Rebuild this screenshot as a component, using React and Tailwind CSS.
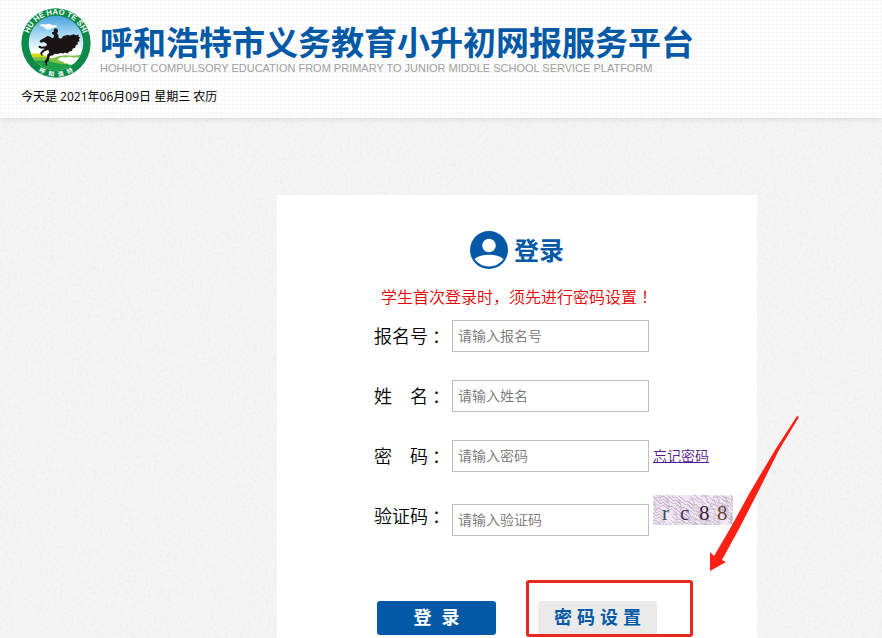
import { useState } from "react";

const FONT = "font-['Noto_Sans_CJK_SC','Liberation_Sans',sans-serif]";

// NOTE: centers trailing full-width punctuation in its cell
const Punct = ({ children }) => <span className="-mr-1 ml-1">{children}</span>;

const Logo = () => (
  <svg viewBox="20 8 208 208" className="h-[70px] w-[70px] shrink-0" role="img" aria-label="HU HE HAO TE SHI">
    <defs>
      <linearGradient id="sky" x1="0" y1="0" x2="0" y2="1">
        <stop offset="0" stopColor="#3f9fdc" />
        <stop offset="0.35" stopColor="#a9d8f3" />
        <stop offset="0.65" stopColor="#ffffff" />
      </linearGradient>
      <clipPath id="inner">
        <circle cx="124" cy="112" r="81" />
      </clipPath>
      <path id="topArc" d="M39 112a85 85 0 0 1 170 0" />
      <path id="bottomArc" d="M25 112a99 99 0 0 0 198 0" />
    </defs>
    <circle cx="124" cy="112" r="103" fill="#0c8a49" />
    <g clipPath="url(#inner)">
      <rect x="40" y="28" width="168" height="168" fill="url(#sky)" />
      <path d="M74 60q10-8 20-2 12-7 20 2 10-4 14 4-12 2-18 5-10 6-16 1-2-6-20-10z" fill="#fff" />
      <path d="M38 150q26-14 50-2 20 8 30 14l-20 30-60-10z" fill="#d3dc14" />
      <path d="M36 162q36-16 76-4 30-14 60-8l40-4v60H36z" fill="#7cc142" />
      <path d="M36 170q44-14 90 2 40 8 86-4v40H36z" fill="#1fa04b" />
      <path d="M128 160q14-10 26-4 10-7 22 0 12-4 20 2 10-3 18 4v9q-12 8-22 3-8 7-18 1-10 5-17-3-9 3-12-5-9 1-17-7z" fill="#fff" />
    </g>
    <path
      d="M92 96l6-5 8 2 7 5 4-2 1-8-5-3-1-5 6-2-1-6 6-4 6 3 1 6-3 6 4 5 1 9 7 2 7-8 12-3 8 2 10-4 8 3 8-2-2 6 6 3-4 5 2 5-6 4 1 6-6 3-2 7-7 2-3 8-7 1-6 6-6-3-7 3-8-1-8 3-9-1-6 5-7 1-3 5-1 9-6 6 1 9-5-1-1-7-3-3 7-9 2-12 6-7-3-7-10 3-8 7 1 7-4-1-3-7 6-8 8-5-12-1-6-2-1-5 5-1 4 3 12-1 5-4-4-6-7-3-8 2-4-3 3-5z"
      fill="#191413"
    />
    <text fontSize="23" fontWeight="700" fill="#fff" textAnchor="middle" className="font-['Liberation_Sans',sans-serif]">
      <textPath href="#topArc" startOffset="50%">HU HE HAO TE SHI</textPath>
    </text>
    <text fontSize="18" fontWeight="700" fill="#fff" textAnchor="middle" xmlSpace="preserve" className="font-['Noto_Sans_CJK_SC',sans-serif]">
      <textPath href="#bottomArc" startOffset="50%">呼&#160;&#160;&#160;和&#160;&#160;&#160;浩&#160;&#160;&#160;特</textPath>
    </text>
  </svg>
);

const UserIcon = () => (
  <svg viewBox="0 0 38 38" className="h-[38px] w-[38px]" aria-hidden="true">
    <circle cx="19" cy="19" r="19" fill="#0459a6" />
    <circle cx="19" cy="14.5" r="6.8" fill="#fff" />
    <path d="M4.5 28Q10 23.8 19 23.8T33.5 28Q28 35.5 19 35.5T4.5 28z" fill="#fff" />
  </svg>
);

const SQUIGGLES = Array.from({ length: 80 }, (_, i) => {
  const x = ((i * 37) % 92) - 8;
  const y = ((i * 29) % 37) - 4;
  const a = (i * 7) % 5;
  const b = (i * 11) % 4;
  return `M${x} ${y}l${1 + a} ${b} 2 ${3 - b} ${b} 3 3 ${a - 2} ${4 - a} 3 2 ${b}`;
});

const Captcha = () => (
  <svg viewBox="0 0 80 30" className="h-[30px] w-[80px] self-start" role="img" aria-label="验证码">
    <rect width="80" height="30" fill="#f0e6f4" />
    {SQUIGGLES.map((d, i) => (
      <path key={i} d={d} fill="none" stroke={i % 2 ? "#bba6c2" : "#ab9bac"} strokeWidth="0.7" />
    ))}
    <g fontSize="21" className="font-['Liberation_Serif',serif]">
      <text x="9" y="25" fill="#2c5560">r</text>
      <text x="27" y="25" fill="#46305f">c</text>
      <text x="46" y="25" fill="#3c2038">8</text>
      <text x="64" y="25" fill="#6b4636">8</text>
    </g>
  </svg>
);

const Field = ({ id, label, placeholder, type = "text", value, onChange, className = "items-center", children }) => (
  <div className={`flex ${className}`}>
    <label
      htmlFor={id}
      className="w-[78px] shrink-0 self-center pb-[2px] text-lg leading-6 font-[350] whitespace-nowrap text-black"
    >
      {label}
      <Punct>：</Punct>
    </label>
    <input
      id={id}
      name={id}
      type={type}
      value={value}
      placeholder={placeholder}
      onChange={onChange}
      className="mr-1 h-8 w-[197px] border border-[#bfbfbf] bg-white px-[5px] pb-[2px] text-sm font-[350] text-black placeholder:text-[#757575]"
    />
    {children}
  </div>
);

const Header = () => (
  <header className="relative z-10 bg-[#fefefe] bg-[linear-gradient(to_right,#f9f9f9_1px,transparent_1px),linear-gradient(to_bottom,#f9f9f9_1px,transparent_1px)] bg-[length:4px_4px] px-[21px] pt-2 pb-3 shadow-[0_1px_6px_rgba(0,0,0,0.12)]">
    <div className="flex items-start gap-[9px]">
      <Logo />
      <div className="pt-[14px] whitespace-nowrap">
        <h1 className="text-[33px] leading-[38px] font-bold text-[#0459a6]">
          呼和浩特市义务教育小升初网报服务平台
        </h1>
        <p className="mt-[2px] font-['Liberation_Sans',sans-serif] text-[11px] leading-3 text-[#a0a0a0]">
          HOHHOT COMPULSORY EDUCATION FROM PRIMARY TO JUNIOR MIDDLE SCHOOL SERVICE PLATFORM
        </p>
      </div>
    </div>
    <p className="mt-[10px] font-['Open_Sans','Noto_Sans_CJK_SC',sans-serif] text-xs leading-[18px] text-black">
      今天是 2021年06月09日 星期三 农历
    </p>
  </header>
);

const Texture = () => (
  <svg className="absolute inset-0 h-full w-full" aria-hidden="true">
    <filter id="paper">
      <feTurbulence type="fractalNoise" baseFrequency="0.35" numOctaves="2" seed="4" />
      <feColorMatrix values="0 0 0 0 0.5  0 0 0 0 0.5  0 0 0 0 0.5  0.25 0 0 0 -0.1" />
    </filter>
    <rect width="100%" height="100%" filter="url(#paper)" />
  </svg>
);

const LoginCard = () => {
  const [form, setForm] = useState({ number: "", name: "", password: "", code: "" });

  const bind = (key) => ({
    id: key,
    value: form[key],
    onChange: (e) => setForm({ ...form, [key]: e.target.value }),
  });

  return (
    <section className="relative w-[480px] max-w-full bg-white pt-9">
      <div className="flex items-center justify-center gap-[6px]">
        <UserIcon />
        <h2 className="pb-[2px] text-[25px] leading-9 font-bold text-[#0459a6]">登录</h2>
      </div>
      <p className="mt-[15px] text-center text-base leading-6 font-[350] text-[#e60000]">
        学生首次登录时，须先进行密码设置<Punct>！</Punct>
      </p>

      <form className="mt-3 pl-[97px]" onSubmit={(e) => e.preventDefault()}>
        <div className="flex flex-col gap-7">
          <Field {...bind("number")} label="报名号" placeholder="请输入报名号" />
          <Field {...bind("name")} label="姓　名" placeholder="请输入姓名" />
          <Field {...bind("password")} type="password" label="密　码" placeholder="请输入密码">
            <a href="#forgot" className="pb-[2px] text-sm font-[350] text-[#551a8b] underline">
              忘记密码
            </a>
          </Field>
        </div>
        <Field
          {...bind("code")}
          label="验证码"
          placeholder="请输入验证码"
          className="mt-[23px] h-[41px] items-end"
        >
          <Captcha />
        </Field>

        <div className="mt-[65px] flex gap-[42px] pl-[3px] font-['Liberation_Sans','Noto_Sans_CJK_SC',sans-serif]">
          <button
            type="submit"
            className="h-[34px] w-[119px] rounded-[3px] bg-[#0459a6] text-lg leading-[34px] font-bold whitespace-pre text-white"
          >
            登  录
          </button>
          <div className="relative">
            <button
              type="button"
              className="h-[34px] w-[119px] rounded-[3px] bg-[#eaeaea] text-lg leading-[34px] font-bold whitespace-nowrap text-[#0459a6]"
            >
              密 码 设 置
            </button>
            <span className="pointer-events-none absolute -top-[21px] -left-3 h-[57px] w-[167px] rounded-[3px] border-3 border-[#e8281e]" />
          </div>
        </div>
      </form>

      {/* callout arrow */}
      <svg viewBox="0 0 90 158" className="pointer-events-none absolute top-[220px] left-[432px] h-[158px] w-[90px]" aria-hidden="true">
        <path d="M88 1L90 2L70 35L48 79L31 112L13 145L17 147L1 156L1 137L5 141L22 112L40 79L66 35z" fill="#fc2114" />
      </svg>
    </section>
  );
};

export default function App() {
  return (
    <div className={`flex min-h-screen flex-col overflow-hidden bg-[#f5f5f5] ${FONT}`}>
      <Header />
      <main className="relative flex flex-1 pt-[77px] pl-[277px]">
        <Texture />
        <LoginCard />
      </main>
    </div>
  );
}
